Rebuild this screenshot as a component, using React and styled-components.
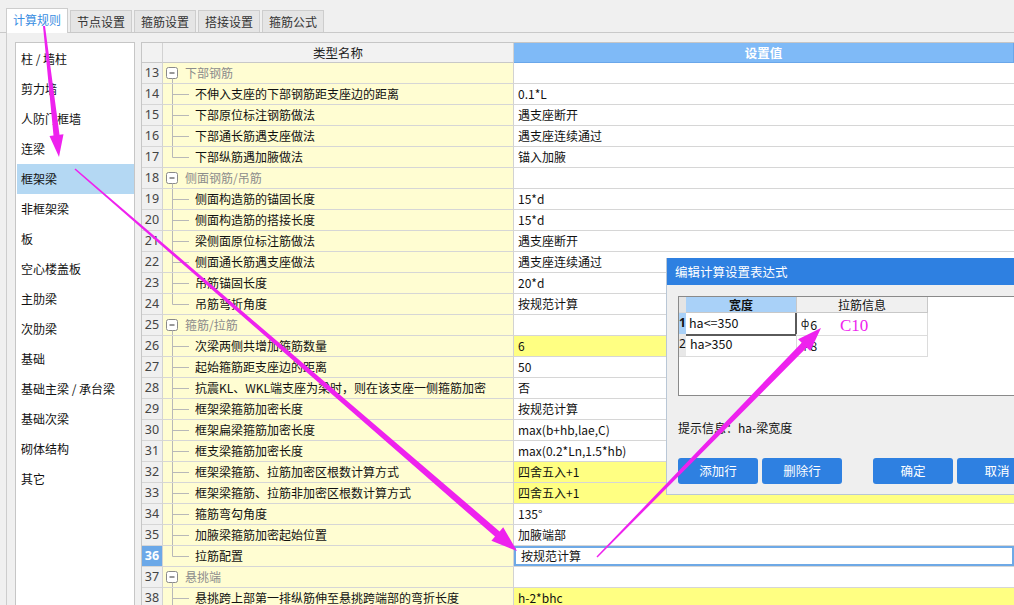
import React from "react";
import styled, { createGlobalStyle } from "styled-components";

const tabs = ["计算规则", "节点设置", "箍筋设置", "搭接设置", "箍筋公式"];

const categories = [
    "柱 / 墙柱",
    "剪力墙",
    "人防门框墙",
    "连梁",
    "框架梁",
    "非框架梁",
    "板",
    "空心楼盖板",
    "主肋梁",
    "次肋梁",
    "基础",
    "基础主梁 / 承台梁",
    "基础次梁",
    "砌体结构",
    "其它",
];

const rows = [
    { no: 13, group: true, name: "下部钢筋" },
    { no: 14, name: "不伸入支座的下部钢筋距支座边的距离", value: "0.1*L" },
    { no: 15, name: "下部原位标注钢筋做法", value: "遇支座断开" },
    { no: 16, name: "下部通长筋遇支座做法", value: "遇支座连续通过" },
    { no: 17, name: "下部纵筋遇加腋做法", value: "锚入加腋", last: true },
    { no: 18, group: true, name: "侧面钢筋/吊筋" },
    { no: 19, name: "侧面构造筋的锚固长度", value: "15*d" },
    { no: 20, name: "侧面构造筋的搭接长度", value: "15*d" },
    { no: 21, name: "梁侧面原位标注筋做法", value: "遇支座断开" },
    { no: 22, name: "侧面通长筋遇支座做法", value: "遇支座连续通过" },
    { no: 23, name: "吊筋锚固长度", value: "20*d" },
    { no: 24, name: "吊筋弯折角度", value: "按规范计算", last: true },
    { no: 25, group: true, name: "箍筋/拉筋" },
    { no: 26, name: "次梁两侧共增加箍筋数量", value: "6", hl: true },
    { no: 27, name: "起始箍筋距支座边的距离", value: "50" },
    { no: 28, name: "抗震KL、WKL端支座为梁时，则在该支座一侧箍筋加密", value: "否" },
    { no: 29, name: "框架梁箍筋加密长度", value: "按规范计算" },
    { no: 30, name: "框架扁梁箍筋加密长度", value: "max(b+hb,lae,C)" },
    { no: 31, name: "框支梁箍筋加密长度", value: "max(0.2*Ln,1.5*hb)" },
    { no: 32, name: "框架梁箍筋、拉筋加密区根数计算方式", value: "四舍五入+1", hl: true },
    { no: 33, name: "框架梁箍筋、拉筋非加密区根数计算方式", value: "四舍五入+1", hl: true },
    { no: 34, name: "箍筋弯勾角度", value: "135°" },
    { no: 35, name: "加腋梁箍筋加密起始位置", value: "加腋端部" },
    { no: 36, name: "拉筋配置", value: "按规范计算", last: true, active: true },
    { no: 37, group: true, name: "悬挑端" },
    { no: 38, name: "悬挑跨上部第一排纵筋伸至悬挑跨端部的弯折长度", value: "h-2*bhc", hl: true },
];

// tapered arrow: thin tail, thick shaft near the head
const arrowPoints = (x0, y0, x1, y1, w0, w1, headLen, headW) => {
    const len = Math.hypot(x1 - x0, y1 - y0);
    const dx = (x1 - x0) / len;
    const dy = (y1 - y0) / len;
    const nx = -dy;
    const ny = dx;
    const bx = x1 - dx * headLen;
    const by = y1 - dy * headLen;
    const pts = [
        [x0 + (nx * w0) / 2, y0 + (ny * w0) / 2],
        [bx + (nx * w1) / 2, by + (ny * w1) / 2],
        [bx + (nx * headW) / 2, by + (ny * headW) / 2],
        [x1, y1],
        [bx - (nx * headW) / 2, by - (ny * headW) / 2],
        [bx - (nx * w1) / 2, by - (ny * w1) / 2],
        [x0 - (nx * w0) / 2, y0 - (ny * w0) / 2],
    ];
    return pts.map((p) => p[0].toFixed(1) + "," + p[1].toFixed(1)).join(" ");
};

const Branch = ({ last }) => (
    <TreeSvg width="32" height="20" viewBox="0 0 32 20">
        <line x1="9.5" y1="0" x2="9.5" y2={last ? 10.5 : 20} stroke="#b8b8b8" />
        <line x1="9.5" y1="10.5" x2="26" y2="10.5" stroke="#b8b8b8" />
    </TreeSvg>
);

const GroupMark = () => (
    <TreeSvg width="22" height="20" viewBox="0 0 22 20">
        <rect x="3.5" y="4.5" width="11" height="11" rx="2" fill="#fff" stroke="#8a8a8a" />
        <line x1="6.5" y1="10" x2="11.5" y2="10" stroke="#333" />
        <line x1="9.5" y1="15.5" x2="9.5" y2="20" stroke="#b8b8b8" />
    </TreeSvg>
);

const App = () => {
    return (
        <>
            <GlobalStyle />
            <Page>
                <TabBar>
                    {tabs.map((t, i) => (
                        <Tab key={t} $active={i === 0}>
                            {t}
                        </Tab>
                    ))}
                </TabBar>
                <Body>
                    <SidePanel>
                        {categories.map((c) => (
                            <SideItem key={c} $selected={c === "框架梁"}>
                                {c}
                            </SideItem>
                        ))}
                    </SidePanel>
                    <Table>
                        <HeadRow>
                            <HeadCell />
                            <HeadCell>类型名称</HeadCell>
                            <HeadCell $accent>设置值</HeadCell>
                        </HeadRow>
                        {rows.map((r) => (
                            <Row key={r.no}>
                                <RowNo $active={r.active}>{r.no}</RowNo>
                                <NameCell>
                                    {r.group ? <GroupMark /> : <Branch last={r.last} />}
                                    <NameText $group={r.group}>{r.name}</NameText>
                                </NameCell>
                                <ValueCell $hl={r.hl} $selected={r.active}>
                                    {r.value}
                                </ValueCell>
                            </Row>
                        ))}
                    </Table>
                </Body>

                <Dialog>
                    <DialogTitle>编辑计算设置表达式</DialogTitle>
                    <DialogBody>
                        <GridBox>
                            <GridRow $header>
                                <GridNo $header />
                                <GridHead $accent>宽度</GridHead>
                                <GridHead>拉筋信息</GridHead>
                            </GridRow>
                            <GridRow>
                                <GridNo $active>1</GridNo>
                                <GridCell $selected>ha&lt;=350</GridCell>
                                <GridCell>
                                    <Rebar>ф</Rebar>6
                                </GridCell>
                            </GridRow>
                            <GridRow>
                                <GridNo>2</GridNo>
                                <GridCell>ha&gt;350</GridCell>
                                <GridCell>
                                    <Rebar>ф</Rebar>8
                                </GridCell>
                            </GridRow>
                        </GridBox>
                        <Hint>提示信息：ha-梁宽度</Hint>
                        <ButtonRow>
                            <Button>添加行</Button>
                            <Button>删除行</Button>
                            <Button $push>确定</Button>
                            <Button>取消</Button>
                        </ButtonRow>
                    </DialogBody>
                    <Note>C10</Note>
                </Dialog>

                <Overlay width="1014" height="605" viewBox="0 0 1014 605">
                    <polygon points={arrowPoints(44, 26, 59, 157, 2, 6, 22, 14)} fill="#ee22ee" />
                    <polygon points={arrowPoints(75, 169, 517, 551, 1.5, 7, 26, 18)} fill="#ee22ee" />
                    <polygon points={arrowPoints(597, 557, 821, 328, 1.5, 7, 24, 17)} fill="#ee22ee" />
                </Overlay>
            </Page>
        </>
    );
};

const GlobalStyle = createGlobalStyle`
    body {
        margin: 0;
        background: #f0f0f0;
        font-family: "Noto Sans CJK SC", "Noto Sans", sans-serif;
        font-size: 12px;
        color: #111;
    }
`;

const Page = styled.div`
    position: relative;
    width: 1014px;
    height: 605px;
    overflow: hidden;
    background: #f0f0f0;
`;

const TabBar = styled.div`
    display: flex;
    align-items: flex-end;
    height: 33px;
    padding-left: 6px;
    box-sizing: border-box;
    border-bottom: 1px solid #c9c9c9;
`;

const Tab = styled.div`
    height: ${({ $active }) => ($active ? "25px" : "22px")};
    margin-left: ${({ $active }) => ($active ? "0" : "2px")};
    margin-bottom: ${({ $active }) => ($active ? "-1px" : "0")};
    padding: 0 6px;
    box-sizing: border-box;
    border: 1px solid #cdcdcd;
    border-bottom: none;
    background: ${({ $active }) => ($active ? "#fff" : "#e5e5e5")};
    color: ${({ $active }) => ($active ? "#3a8ee2" : "#333")};
    font-size: 12px;
    line-height: ${({ $active }) => ($active ? "22px" : "21px")};
`;

const Body = styled.div`
    display: flex;
    gap: 6px;
    height: 572px;
    margin-left: 6px;
    padding: 9px 0 0 8px;
    border-left: 1px solid #cdcdcd;
`;

const SidePanel = styled.div`
    width: 120px;
    height: 580px;
    flex-shrink: 0;
    box-sizing: border-box;
    padding: 1px 0 0 1px;
    border: 1px solid #c6c6c6;
    background: #fff;
`;

const SideItem = styled.div`
    height: 30px;
    padding-left: 4px;
    line-height: 30px;
    font-size: 12px;
    color: #111;
    background: ${({ $selected }) => ($selected ? "#b4d8f3" : "transparent")};
`;

const Table = styled.div`
    flex: 1;
    border-left: 1px solid #c6c6c6;
    border-top: 1px solid #c6c6c6;
    background: #fff;
`;

const HeadRow = styled.div`
    display: grid;
    grid-template-columns: 21px 351px 1fr;
    height: 20px;
`;

const HeadCell = styled.div`
    box-sizing: border-box;
    border-right: 1px solid ${({ $accent }) => ($accent ? "#6aa7ea" : "#d2d2d2")};
    border-bottom: 1px solid ${({ $accent }) => ($accent ? "#6aa7ea" : "#c8c8c8")};
    background: ${({ $accent }) => ($accent ? "#7fbaf7" : "#f2f2f2")};
    color: ${({ $accent }) => ($accent ? "#fff" : "#222")};
    font-weight: ${({ $accent }) => ($accent ? "bold" : "normal")};
    font-size: 12.5px;
    line-height: 19px;
    text-align: center;
`;

const Row = styled.div`
    display: grid;
    grid-template-columns: 21px 351px 1fr;
    height: 21px;
`;

const RowNo = styled.div`
    box-sizing: border-box;
    border-right: 1px solid #d2d2d2;
    border-bottom: 1px solid #d6d6d6;
    background: ${({ $active }) => ($active ? "#6ba8e8" : "#f0f0f0")};
    color: ${({ $active }) => ($active ? "#fff" : "#444")};
    font-family: "Noto Sans", sans-serif;
    font-weight: ${({ $active }) => ($active ? "bold" : "normal")};
    font-size: 12.5px;
    line-height: 20px;
    text-align: center;
`;

const NameCell = styled.div`
    display: flex;
    align-items: center;
    box-sizing: border-box;
    border-right: 1px solid #d2d2d2;
    border-bottom: 1px solid #d6d6d6;
    background: #fffdd2;
    overflow: hidden;
    white-space: nowrap;
`;

const TreeSvg = styled.svg`
    display: block;
    flex-shrink: 0;
`;

const NameText = styled.span`
    font-size: 12px;
    line-height: 20px;
    color: ${({ $group }) => ($group ? "#8c8c8c" : "#111")};
`;

const ValueCell = styled.div`
    box-sizing: border-box;
    padding-left: ${({ $selected }) => ($selected ? "7px" : "4px")};
    border-bottom: 1px solid #d6d6d6;
    background: ${({ $hl }) => ($hl ? "#ffff82" : "#fff")};
    box-shadow: ${({ $selected }) => ($selected ? "inset 0 0 0 2px #6ea9e6" : "none")};
    font-size: 12px;
    line-height: 20px;
    white-space: nowrap;
`;

const Dialog = styled.div`
    position: absolute;
    left: 666px;
    top: 258px;
    width: 372px;
    height: 237px;
    box-sizing: border-box;
    border: 1px solid #b9c7d6;
    border-top: none;
    background: #efefef;
    overflow: hidden;
    z-index: 5;
`;

const DialogTitle = styled.div`
    height: 27px;
    padding-left: 8px;
    background: #2e80e1;
    color: #fff;
    font-size: 12.5px;
    line-height: 27px;
`;

const DialogBody = styled.div`
    padding: 11px 0 0 11px;
`;

const GridBox = styled.div`
    height: 100px;
    box-sizing: border-box;
    border: 1px solid #8a8a8a;
    background: #fff;
`;

const GridRow = styled.div`
    display: grid;
    grid-template-columns: 7px 111px 131px;
    height: ${({ $header }) => ($header ? "16px" : "21px")};
`;

const GridNo = styled.div`
    background: ${({ $active, $header }) => ($active ? "#a9d1f8" : $header ? "#e4e4e4" : "#e8e8e8")};
    border-bottom: 1px solid #dcdcdc;
    font-family: "Noto Sans", sans-serif;
    font-size: 12px;
    font-weight: ${({ $active }) => ($active ? "bold" : "normal")};
    line-height: 20px;
    text-align: center;
    overflow: hidden;
`;

const GridHead = styled.div`
    box-sizing: border-box;
    border-right: 1px solid #c8c8c8;
    border-bottom: 1px solid #c8c8c8;
    background: ${({ $accent }) => ($accent ? "#a9d1f8" : "#f0f0f0")};
    font-weight: ${({ $accent }) => ($accent ? "bold" : "normal")};
    font-size: 12px;
    line-height: 15px;
    text-align: center;
`;

const GridCell = styled.div`
    box-sizing: border-box;
    padding-left: ${({ $selected }) => ($selected ? "3px" : "4px")};
    border-right: ${({ $selected }) => ($selected ? "2px solid #5a5a5a" : "1px solid #dcdcdc")};
    border-bottom: ${({ $selected }) => ($selected ? "2px solid #5a5a5a" : "1px solid #dcdcdc")};
    font-size: 12.5px;
    line-height: 20px;
    white-space: nowrap;
`;

const Rebar = styled.span`
    font-size: 10px;
    vertical-align: 3px;
    margin-right: 1px;
`;

const Hint = styled.div`
    margin-top: 24px;
    font-size: 12px;
    line-height: 16px;
`;

const ButtonRow = styled.div`
    display: flex;
    gap: 4px;
    margin-top: 22px;
`;

const Button = styled.div`
    width: 80px;
    height: 26px;
    flex-shrink: 0;
    margin-left: ${({ $push }) => ($push ? "27px" : "0")};
    border-radius: 3px;
    background: #2e80e1;
    color: #fff;
    font-size: 12.5px;
    line-height: 26px;
    text-align: center;
`;

const Note = styled.div`
    position: absolute;
    left: 173px;
    top: 58px;
    color: #ee22ee;
    font-family: "Liberation Serif", serif;
    font-size: 17px;
`;

const Overlay = styled.svg`
    position: absolute;
    left: 0;
    top: 0;
    pointer-events: none;
    z-index: 10;
`;

export default App;
